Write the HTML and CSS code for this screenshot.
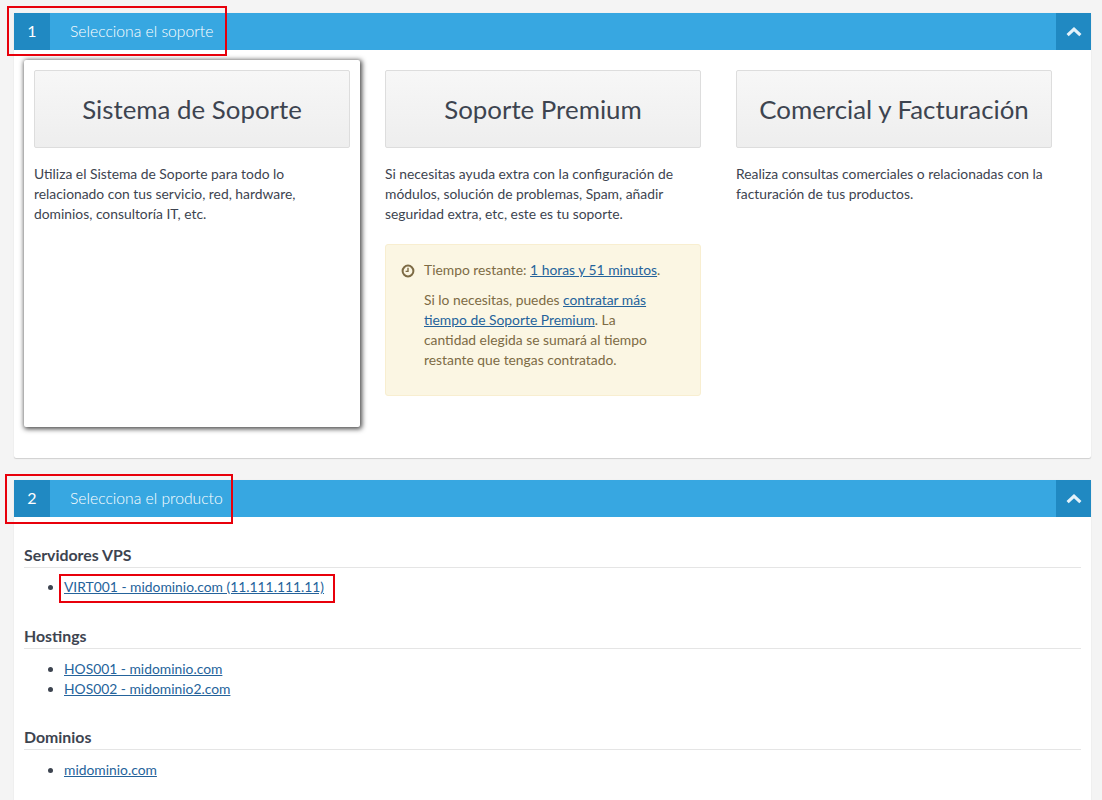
FILE: index.html
```html
<!DOCTYPE html>
<html lang="es">
<head>
    <meta charset="UTF-8">
    <title>Soporte</title>
    <link rel="stylesheet" href="styles.css">
</head>
<body>
    <section class="panel panel-first">
        <header class="panel-head">
            <span class="step">1</span>
            <h2 class="panel-title">Selecciona el soporte</h2>
            <span class="toggle">
                <svg width="16" height="10" viewBox="0 0 16 10"><path d="M1.6 8.2 8 2.2 14.4 8.2" fill="none" stroke="#e4f2fa" stroke-width="3.2"/></svg>
            </span>
        </header>
        <div class="options">
            <div class="option selected">
                <div class="option-btn">Sistema de Soporte</div>
                <p class="option-text">Utiliza el Sistema de Soporte para todo lo relacionado con tus servicio, red, hardware, dominios, consultoría IT, etc.</p>
            </div>
            <div class="option">
                <div class="option-btn">Soporte Premium</div>
                <p class="option-text">Si necesitas ayuda extra con la configuración de módulos, solución de problemas, Spam, añadir seguridad extra, etc, este es tu soporte.</p>
                <div class="notice">
                    <svg class="notice-icon" width="14" height="14" viewBox="0 0 14 14"><circle cx="7" cy="7" r="5.4" fill="none" stroke="#7d6b45" stroke-width="2"/><path d="M7 3.8V7.4H4.6" fill="none" stroke="#7d6b45" stroke-width="1.4"/></svg>
                    <div class="notice-body">
                        <p>Tiempo restante: <a href="#">1 horas y 51 minutos</a>.</p>
                        <p>Si lo necesitas, puedes <a href="#">contratar más tiempo de Soporte Premium</a>. La cantidad elegida se sumará al tiempo restante que tengas contratado.</p>
                    </div>
                </div>
            </div>
            <div class="option">
                <div class="option-btn">Comercial y Facturación</div>
                <p class="option-text">Realiza consultas comerciales o relacionadas con la facturación de tus productos.</p>
            </div>
        </div>
    </section>

    <section class="panel">
        <header class="panel-head">
            <span class="step">2</span>
            <h2 class="panel-title">Selecciona el producto</h2>
            <span class="toggle">
                <svg width="16" height="10" viewBox="0 0 16 10"><path d="M1.6 8.2 8 2.2 14.4 8.2" fill="none" stroke="#e4f2fa" stroke-width="3.2"/></svg>
            </span>
        </header>
        <div class="products">
            <h3 class="group-title">Servidores VPS</h3>
            <ul class="group-list">
                <li><a href="#">VIRT001 - midominio.com (11.111.111.11)</a></li>
            </ul>
            <h3 class="group-title">Hostings</h3>
            <ul class="group-list">
                <li><a href="#">HOS001 - midominio.com</a></li>
                <li><a href="#">HOS002 - midominio2.com</a></li>
            </ul>
            <h3 class="group-title">Dominios</h3>
            <ul class="group-list">
                <li><a href="#">midominio.com</a></li>
            </ul>
        </div>
    </section>

    <div class="mark mark-one"></div>
    <div class="mark mark-two"></div>
    <div class="mark mark-three"></div>
</body>
</html>
```
FILE: styles.css
```css
html {
    height: 800px;
    overflow: hidden;
}

body {
    margin: 0;
    padding: 13px 11px 0 14px;
    background: #f4f4f4;
    font-family: "Lato", sans-serif;
    font-size: 13.85px;
    line-height: 20px;
    color: #3d4450;
    position: relative;
}

a {
    color: #25639b;
}

.panel {
    background: #fff;
    box-shadow: 0 1px 1px rgba(0, 0, 0, 0.14), 0 0 1px rgba(0, 0, 0, 0.1);
    border-radius: 2px;
}

.panel-first {
    margin-bottom: 22px;
}

.panel-head {
    display: flex;
    align-items: center;
    height: 37px;
    background: #37a7e1;
    color: #fff;
}

.step {
    width: 36px;
    height: 37px;
    background: #2089c2;
    font-size: 16px;
    line-height: 35px;
    text-align: center;
}

.panel-title {
    flex: 1;
    margin: 0 0 2px 20px;
    font-size: 15.7px;
    font-weight: 300;
}

.toggle {
    width: 35px;
    height: 37px;
    background: #2089c2;
    display: flex;
    align-items: center;
    justify-content: center;
}

.options {
    display: flex;
    gap: 15px;
    padding: 10px 29px 31px 10px;
}

.option {
    flex: 0 0 336px;
    height: 367px;
    box-sizing: border-box;
    padding: 10px;
}

.selected {
    border-radius: 2px;
    box-shadow: 1px 1px 5px 1px rgba(0, 0, 0, 0.72);
}

.option-btn {
    height: 78px;
    box-sizing: border-box;
    border: 1px solid #ddd;
    border-radius: 2px;
    background: linear-gradient(#f7f7f7, #eee);
    font-size: 25.85px;
    line-height: 76px;
    text-align: center;
}

.option-text {
    margin: 16px 0 0;
}

.notice {
    display: flex;
    margin-top: 20px;
    padding: 15px 32px 15px 15px;
    height: 152px;
    box-sizing: border-box;
    background: #fbf6e3;
    border: 1px solid #f8eed0;
    border-radius: 3px;
    color: #7d6b45;
}

.notice-icon {
    flex: none;
    margin: 4px 9px 0 0;
}

.notice-body p {
    margin: 0 0 10px;
}

.products {
    padding: 27px 10px 20px;
}

.group-title {
    margin: 0 0 9px;
    padding-bottom: 1px;
    border-bottom: 1px solid #e5e5e5;
    font-size: 15.85px;
    font-weight: 700;
    line-height: 22px;
}

.group-list + .group-title {
    margin-bottom: 10px;
}

.group-list {
    margin: 0 0 27.6px;
    padding-left: 40px;
}

.mark {
    position: absolute;
    box-sizing: border-box;
    border: 2px solid #e8000b;
}

.mark-one {
    left: 7px;
    top: 6px;
    width: 220px;
    height: 50px;
}

.mark-two {
    left: 5px;
    top: 474px;
    width: 228px;
    height: 50px;
}

.mark-three {
    left: 59px;
    top: 574px;
    width: 276px;
    height: 29px;
}
```
